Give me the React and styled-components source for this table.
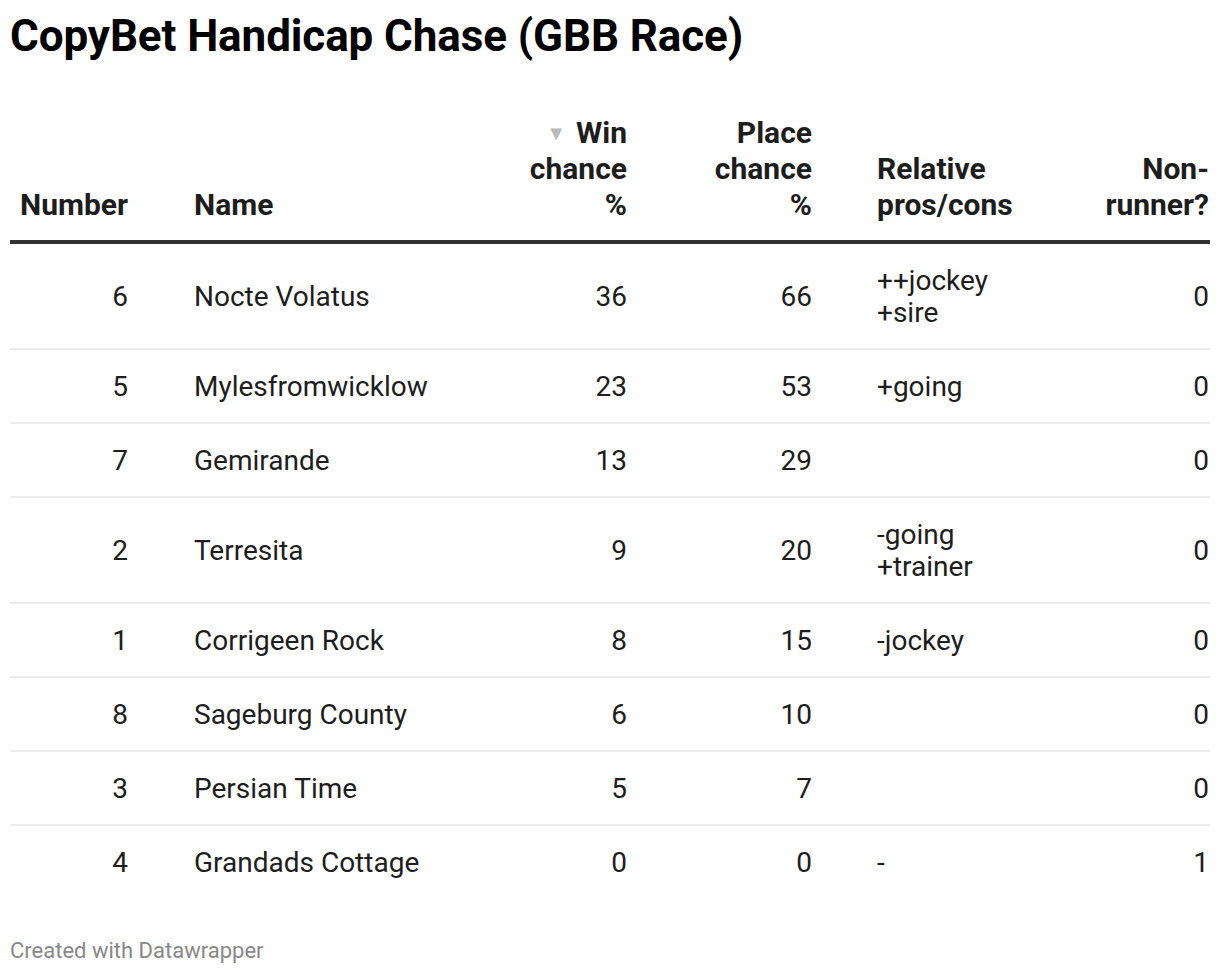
import React from "react";
import styled, { createGlobalStyle } from "styled-components";

const Global = createGlobalStyle`
  html, body { margin: 0; padding: 0; background: #fff; }
  body { font-family: Roboto, "Liberation Sans", sans-serif; color: #1d1d1d; }
`;

const Page = styled.div`
  width: 1220px;
  height: 974px;
  box-sizing: border-box;
  padding: 10px 10px 0 10px;
  display: flex;
  flex-direction: column;
`;

const Title = styled.h1`
  margin: 0;
  font-size: 44px;
  line-height: 52px;
  font-weight: 700;
  color: #000;
  letter-spacing: -0.1px;
`;

const Table = styled.table`
  margin-top: 53px;
  width: 1200px;
  border-collapse: collapse;
  table-layout: fixed;
`;

const Th = styled.th`
  width: ${(p) => p.$w}px;
  text-align: ${(p) => p.$align};
  padding: 0 ${(p) => p.$pr || 0}px 17px ${(p) => p.$pl || 0}px;
  vertical-align: bottom;
  font-size: 30px;
  line-height: 36px;
  font-weight: 700;
  color: #1d1d1d;
  border-bottom: 4px solid #333;
  box-sizing: border-box;
`;

const Td = styled.td`
  text-align: ${(p) => p.$align};
  padding: 21px ${(p) => p.$pr || 0}px 19px ${(p) => p.$pl || 0}px;
  vertical-align: middle;
  font-size: 28px;
  line-height: 32px;
  font-weight: 400;
  color: #1d1d1d;
`;

const Row = styled.tr`
  border-bottom: ${(p) => (p.$last ? "none" : "2px solid #ececec")};
`;

const SortArrow = styled.span`
  display: inline-block;
  color: #bbb;
  font-size: 20px;
  vertical-align: 3px;
  margin-right: 10px;
`;

const Footer = styled.div`
  margin-top: auto;
  margin-bottom: 11px;
  font-size: 22px;
  color: #888;
`;

const cols = [
  { w: 151, align: "right", pr: 33 },
  { w: 289, align: "left", pl: 33 },
  { w: 210, align: "right", pr: 33 },
  { w: 185, align: "right", pr: 33 },
  { w: 255, align: "left", pl: 32 },
  { w: 110, align: "right", pr: 1 },
];

const rows = [
  ["6", "Nocte Volatus", "36", "66", ["++jockey", "+sire"], "0"],
  ["5", "Mylesfromwicklow", "23", "53", ["+going"], "0"],
  ["7", "Gemirande", "13", "29", [], "0"],
  ["2", "Terresita", "9", "20", ["-going", "+trainer"], "0"],
  ["1", "Corrigeen Rock", "8", "15", ["-jockey"], "0"],
  ["8", "Sageburg County", "6", "10", [], "0"],
  ["3", "Persian Time", "5", "7", [], "0"],
  ["4", "Grandads Cottage", "0", "0", ["-"], "1"],
];

const headers = [
  "Number",
  "Name",
  <>
    <SortArrow>▼</SortArrow>Win
    <br />
    chance
    <br />%
  </>,
  <>
    Place
    <br />
    chance
    <br />%
  </>,
  <>
    Relative
    <br />
    pros/cons
  </>,
  <>
    Non-
    <br />
    runner?
  </>,
];

export default function App() {
  return (
    <>
      <Global />
      <Page>
        <Title>CopyBet Handicap Chase (GBB Race)</Title>
        <Table>
          <thead>
            <tr>
              {headers.map((h, i) => (
                <Th key={i} $w={cols[i].w} $align={cols[i].align} $pl={cols[i].pl} $pr={cols[i].pr}>
                  {h}
                </Th>
              ))}
            </tr>
          </thead>
          <tbody>
            {rows.map((r, ri) => (
              <Row key={ri} $last={ri === rows.length - 1}>
                {r.map((c, ci) => (
                  <Td key={ci} $align={cols[ci].align} $pl={cols[ci].pl} $pr={cols[ci].pr}>
                    {Array.isArray(c)
                      ? c.map((line, li) => (
                          <React.Fragment key={li}>
                            {li > 0 && <br />}
                            {line}
                          </React.Fragment>
                        ))
                      : c}
                  </Td>
                ))}
              </Row>
            ))}
          </tbody>
        </Table>
        <Footer>Created with Datawrapper</Footer>
      </Page>
    </>
  );
}
